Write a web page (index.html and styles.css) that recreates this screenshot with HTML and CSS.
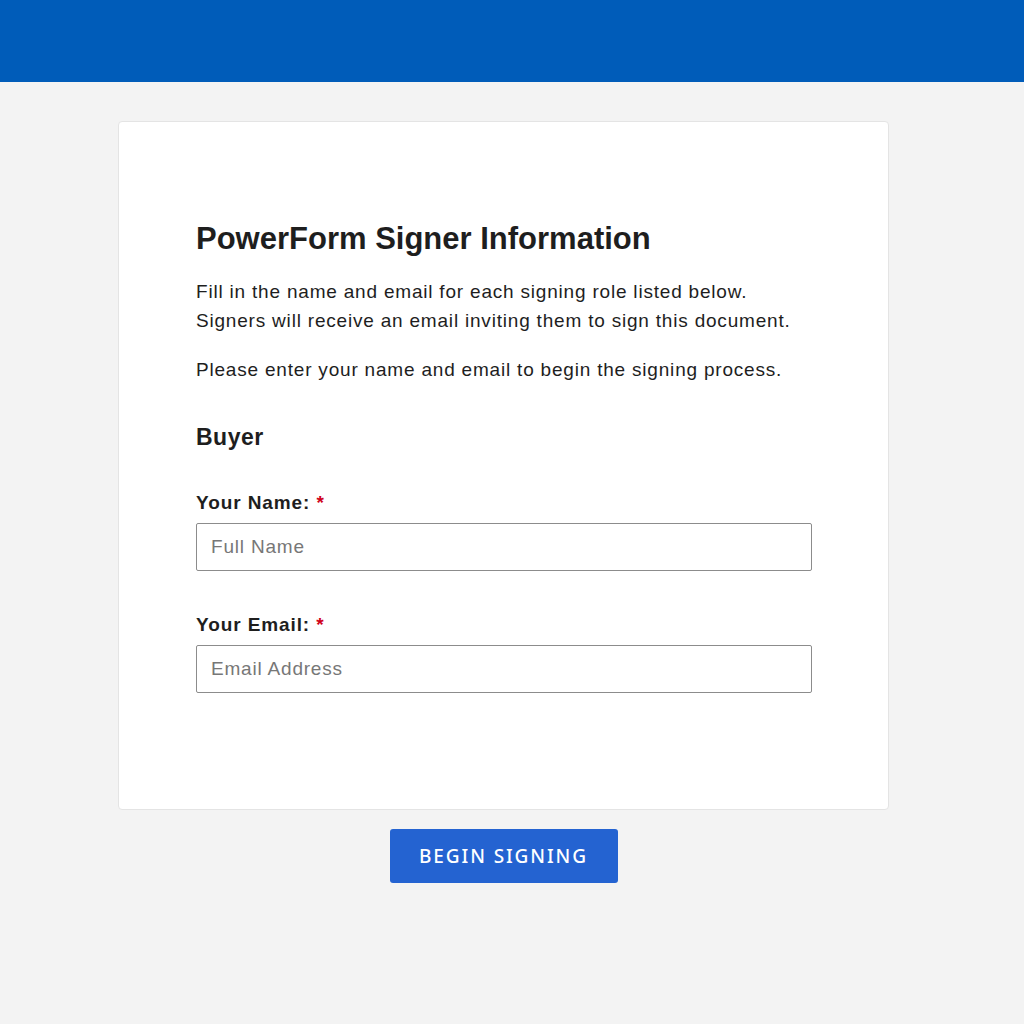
FILE: index.html
```html
<!DOCTYPE html>
<html lang="en">
<head>
    <meta charset="UTF-8">
    <meta name="viewport" content="width=device-width, initial-scale=1.0">
    <title>PowerForm Signer Information</title>
    <link rel="stylesheet" href="styles.css">
</head>
<body>
    <header class="topbar"></header>

    <main class="page">
        <form class="card" onsubmit="return false">
            <h1 class="title">PowerForm Signer Information</h1>
            <p class="intro">Fill in the name and email for each signing role listed below.<br>
                Signers will receive an email inviting them to sign this document.</p>
            <p class="intro">Please enter your name and email to begin the signing process.</p>

            <h2 class="role">Buyer</h2>

            <div class="field">
                <label for="name">Your Name: <span class="req">*</span></label>
                <input type="text" id="name" placeholder="Full Name">
            </div>

            <div class="field">
                <label for="email">Your Email: <span class="req">*</span></label>
                <input type="email" id="email" placeholder="Email Address">
            </div>
        </form>

        <button class="button" type="button">Begin Signing</button>
    </main>
</body>
</html>
```

FILE: styles.css
```css
body {
    margin: 0;
    padding: 0;
    background: #f3f3f3;
    font-family: "Liberation Sans", Arial, sans-serif;
    color: #1e1e1e;
}

.topbar {
    height: 82px;
    background-color: #005cb9;
}

.page {
    display: flex;
    flex-direction: column;
    align-items: center;
    padding: 39px 17px 0 0;
}

.card {
    box-sizing: border-box;
    width: 771px;
    margin: 0;
    padding: 100px 77px 116px 77px;
    background: #fff;
    border: 1px solid #e4e4e4;
    border-radius: 4px;
}

.title {
    margin: 0 0 21px;
    font-size: 31px;
    line-height: 34px;
    font-weight: bold;
}

.intro {
    margin: 0 0 20px;
    font-size: 19px;
    line-height: 29px;
    letter-spacing: 0.8px;
}

.role {
    margin: 39px 0 0;
    font-size: 23px;
    line-height: 28px;
    letter-spacing: 0.5px;
    font-weight: bold;
}

.field {
    margin-top: 41px;
}

.field + .field {
    margin-top: 43px;
}

.field label {
    display: block;
    font-size: 19px;
    line-height: 22px;
    letter-spacing: 0.9px;
    font-weight: bold;
    margin-bottom: 9px;
}

.req {
    color: #d0021b;
}

.field input {
    box-sizing: border-box;
    display: block;
    width: 616px;
    height: 48px;
    padding: 0 14px;
    border: 1px solid #8c8c8c;
    border-radius: 2px;
    font-family: "Liberation Sans", Arial, sans-serif;
    font-size: 19px;
    letter-spacing: 0.8px;
    color: #1e1e1e;
}

.field input::placeholder {
    color: #777;
}

.button {
    margin-top: 19px;
    width: 228px;
    height: 54px;
    padding: 0;
    background-color: #2463d1;
    color: #fff;
    border: none;
    border-radius: 3px;
    font-family: "Noto Sans", "Open Sans", sans-serif;
    font-size: 19px;
    font-weight: 500;
    letter-spacing: 1.9px;
    text-transform: uppercase;
    cursor: pointer;
}
```
